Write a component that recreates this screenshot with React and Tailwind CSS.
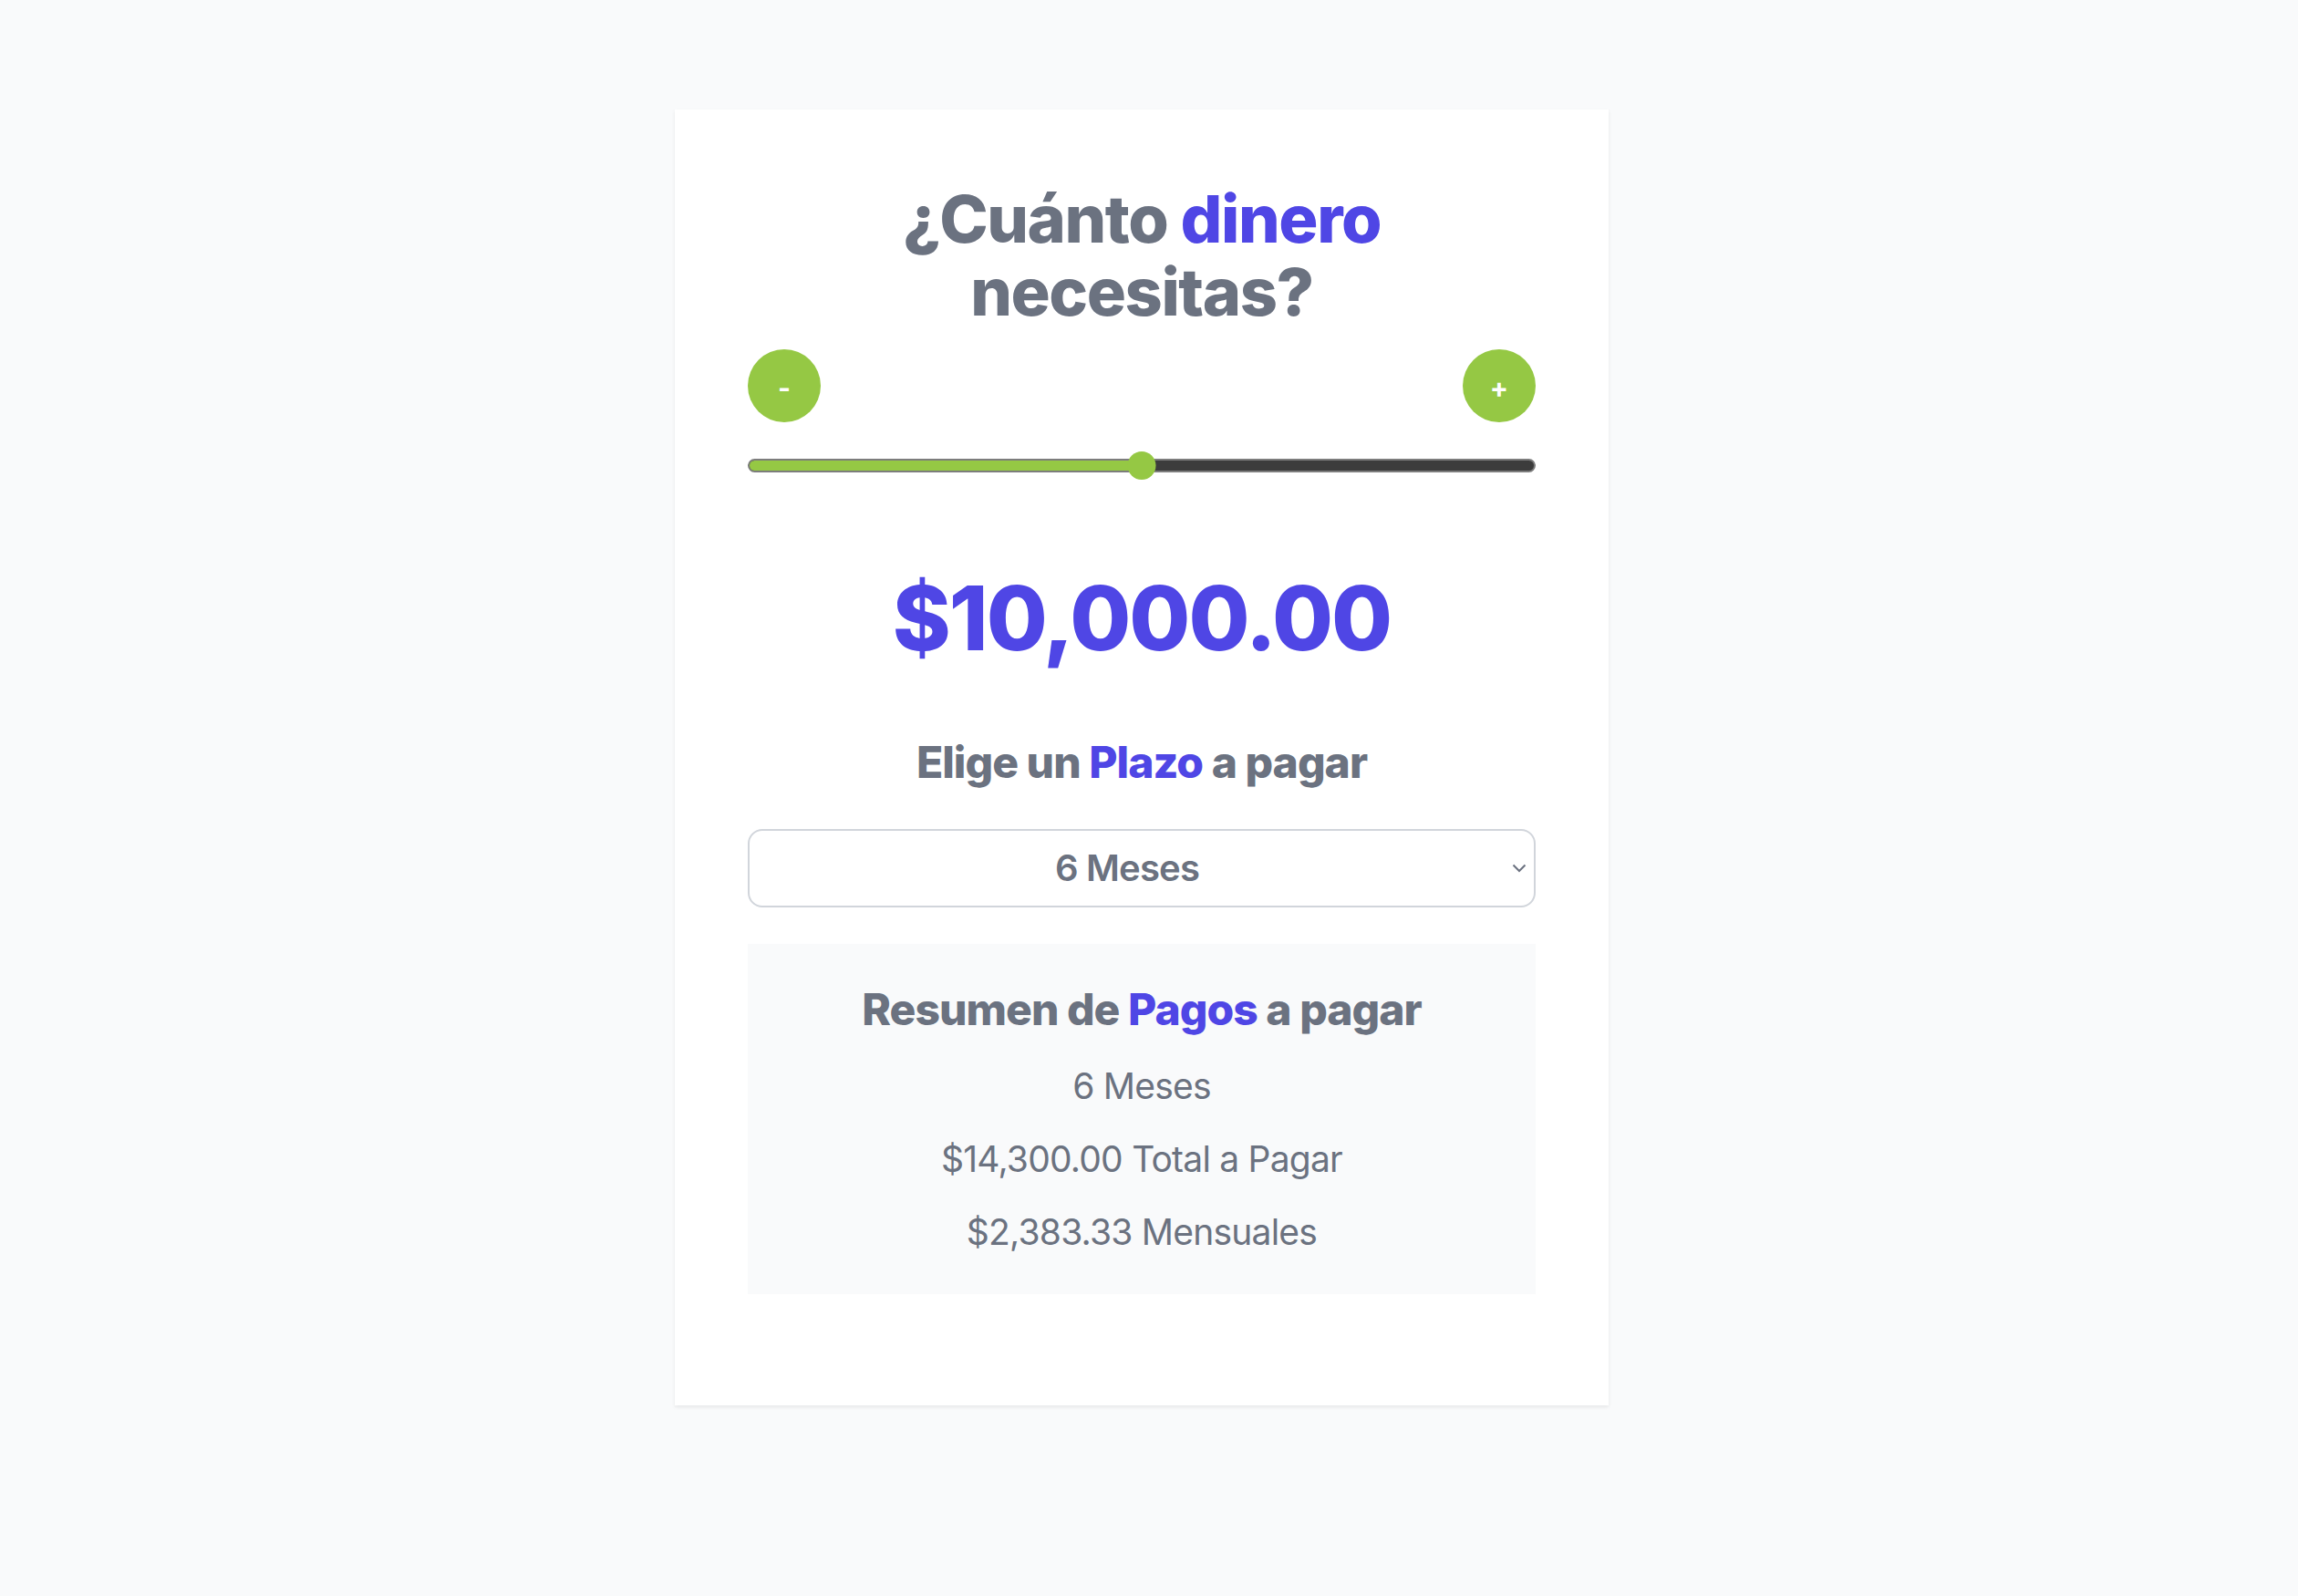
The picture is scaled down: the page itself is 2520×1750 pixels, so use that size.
import React, { useState } from 'react';

const fmt = (n) => '$' + n.toLocaleString('en-US', { minimumFractionDigits: 2, maximumFractionDigits: 2 });

export default function App() {
    const [amount, setAmount] = useState(10000);
    const [months, setMonths] = useState(6);
    const min = 0;
    const max = 20000;
    const pct = ((amount - min) / (max - min)) * 100;
    const total = 14300;

    return (
        <div className="min-h-screen bg-[#f9fafb] pr-4 pt-[120px] pb-[211px] font-['Inter',sans-serif]">
            <div className="mx-auto w-[1024px] bg-white px-20 pt-20 pb-[122px] shadow-[0_2px_4px_rgba(0,0,0,0.08)]">
                {/* Heading */}
                <h1 className="text-center text-[72px] leading-[80px] font-extrabold tracking-[-0.02em] text-[#6b7280]">
                    ¿Cuánto <span className="text-[#4f46e5]">dinero</span>
                    <br />
                    necesitas?
                </h1>

                {/* Buttons */}
                <div className="mt-[23px] flex items-center justify-between">
                    <button
                        onClick={() => setAmount(Math.max(min, amount - 1000))}
                        className="flex h-20 w-20 items-center justify-center rounded-full bg-[#95c844] pt-1 text-[30px] font-bold text-white"
                    >
                        -
                    </button>
                    <button
                        onClick={() => setAmount(Math.min(max, amount + 1000))}
                        className="flex h-20 w-20 items-center justify-center rounded-full bg-[#95c844] pt-1 text-[30px] font-bold text-white"
                    >
                        +
                    </button>
                </div>

                {/* Slider */}
                <div className="relative mt-8 h-8">
                    <div className="absolute left-0 right-0 top-2 h-[15px] overflow-hidden rounded-full border-2 border-[#7d7d7d] bg-[#3c3c3c]">
                        <div className="h-full bg-[#95c844]" style={{ width: `${pct}%` }} />
                    </div>
                    <div
                        className="absolute top-0 h-[31px] w-[31px] -translate-x-1/2 rounded-full bg-[#95c844]"
                        style={{ left: `${pct}%` }}
                    />
                </div>

                {/* Amount */}
                <div className="mt-[103px] text-center text-[97px] leading-[96px] font-extrabold tracking-[-0.02em] text-[#4f46e5]">
                    {fmt(amount)}
                </div>

                {/* Plazo */}
                <h2 className="mt-[78px] text-center text-[48px] leading-[64px] font-extrabold tracking-[-0.02em] text-[#6b7280]">
                    Elige un <span className="text-[#4f46e5]">Plazo</span> a pagar
                </h2>

                <div className="relative mt-[41px]">
                    <select
                        value={months}
                        onChange={(e) => setMonths(Number(e.target.value))}
                        className="h-[86px] w-full appearance-none rounded-2xl border-2 border-[#d1d5db] bg-white pr-8 text-center text-[40px] font-semibold tracking-[-0.02em] text-[#6b7280] outline-none"
                    >
                        <option value={6}>6 Meses</option>
                        <option value={12}>12 Meses</option>
                        <option value={18}>18 Meses</option>
                        <option value={24}>24 Meses</option>
                    </select>
                    <svg className="pointer-events-none absolute right-[10px] top-[38px] h-[10px] w-[16px]" viewBox="0 0 16 10" fill="none">
                        <path d="M1.5 1.5 L8 8 L14.5 1.5" stroke="#6b7280" strokeWidth="2" />
                    </svg>
                </div>

                {/* Summary */}
                <div className="mt-10 bg-[#f9fafb] py-10 text-center text-[#6b7280]">
                    <h3 className="text-[48px] leading-[64px] font-extrabold tracking-[-0.02em]">
                        Resumen de <span className="text-[#4f46e5]">Pagos</span> a pagar
                    </h3>
                    <div className="mt-6 flex flex-col gap-6 text-[39px] leading-[56px] tracking-[-0.02em]">
                        <p>{months} Meses</p>
                        <p>{fmt(total)} Total a Pagar</p>
                        <p>{fmt(total / months)} Mensuales</p>
                    </div>
                </div>
            </div>
        </div>
    );
}
